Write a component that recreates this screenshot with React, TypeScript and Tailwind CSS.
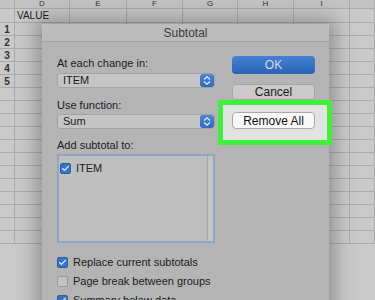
import { Check } from 'lucide-react'

const cols = ['D', 'E', 'F', 'G', 'H', 'I', '']
const rows = Array.from({ length: 17 }, (_, i) => i)

function Stepper() {
  return (
    <div className="w-[14px] h-full rounded-[3px] bg-gradient-to-b from-[#4a86d8] to-[#2f68bd] flex flex-col items-center justify-center gap-[1px]">
      <svg width="8" height="4" viewBox="0 0 8 4">
        <path d="M1 3.5 L4 0.8 L7 3.5" fill="none" stroke="#e8eef8" strokeWidth="1.2" />
      </svg>
      <svg width="8" height="4" viewBox="0 0 8 4">
        <path d="M1 0.5 L4 3.2 L7 0.5" fill="none" stroke="#e8eef8" strokeWidth="1.2" />
      </svg>
    </div>
  )
}

function Select({ value }: { value: string }) {
  return (
    <div className="h-[15px] w-full flex items-stretch rounded-[3px] bg-[#c5c5c5] border border-[#a3a3a3]">
      <span className="flex-1 pl-[5px] text-[11px] leading-[13px] text-[#1c1c1c]">{value}</span>
      <Stepper />
    </div>
  )
}

function Box({ checked }: { checked: boolean }) {
  return checked ? (
    <span className="w-[11px] h-[11px] rounded-[2px] bg-[#3675c6] border border-[#2a5ea6] flex items-center justify-center">
      <Check className="w-[9px] h-[9px] text-[#e8eef8]" strokeWidth={3} />
    </span>
  ) : (
    <span className="w-[11px] h-[11px] rounded-[2px] bg-[#c3c3c3] border border-[#9a9a9a]" />
  )
}

function CheckRow({ checked, label }: { checked: boolean; label: string }) {
  return (
    <div className="h-[14px] flex items-center gap-[5px] whitespace-nowrap">
      <Box checked={checked} />
      <span className="text-[11px] leading-[14px] text-[#1c1c1c]">{label}</span>
    </div>
  )
}

export default function App() {
  return (
    <div
      className="relative w-[375px] h-[300px] overflow-hidden bg-[#c9c9c9]"
      style={{ fontFamily: '"Liberation Sans", Arial, sans-serif' }}
    >
      {/* sheet */}
      <div className="grid grid-cols-[15px_55px_57px_56px_55px_56px_56px_25px]">
        <div className="h-[9px] border-r border-b border-[#aaaaaa] bg-[#c3c3c3]" />
        {cols.map((c, i) => (
          <div
            key={i}
            className="h-[9px] border-r border-b border-[#aaaaaa] bg-[#c3c3c3] flex justify-center"
          >
            <span className="text-[8px] leading-[8px] text-[#333]">{c}</span>
          </div>
        ))}
        <div className="h-[14px] border-r border-b border-[#aaaaaa]" />
        <div className="h-[14px] border-r border-b border-[#aaaaaa] pl-[2px] text-[10px] leading-[14px] text-[#222]">
          VALUE
        </div>
        {cols.slice(1).map((_, i) => (
          <div key={i} className="h-[14px] border-r border-b border-[#aaaaaa]" />
        ))}
        {rows.map((r) => (
          <div key={r} className="contents">
            <div className="h-[13px] border-r border-b border-[#aaaaaa] text-[10px] leading-[13px] font-bold text-[#333] text-center">
              {r < 5 ? r + 1 : ''}
            </div>
            {cols.map((_, i) => (
              <div key={i} className="h-[13px] border-r border-b border-[#aaaaaa]" />
            ))}
          </div>
        ))}
      </div>

      {/* green highlight, drawn under the Remove All button */}
      <div className="absolute left-[218px] top-[100px] w-[114px] h-[45px] border-[5px] border-[#3ef03a] bg-[#e2e2e2] z-[5]" />

      {/* dialog window */}
      <div className="absolute left-[42px] top-[24px] w-[287px] h-[300px] flex flex-col shadow-[0_0_18px_6px_rgba(0,0,0,0.28)]">
        <div className="h-[18px] bg-[#bcbcbc] border-b border-[#a4a4a4] rounded-t-[4px] flex items-center justify-center">
          <span className="text-[12px] leading-[14px] text-[#3a3a3a]">Subtotal</span>
        </div>
        <div className="flex-1 bg-[#b4b4b4] flex pl-[15px] pt-[14px]">
          <div className="w-[158px] flex flex-col">
            <span className="text-[11px] leading-[14px] text-[#1c1c1c]">At each change in:</span>
            <div className="mt-[3px]">
              <Select value="ITEM" />
            </div>
            <span className="mt-[10px] text-[11px] leading-[14px] text-[#1c1c1c]">Use function:</span>
            <div className="mt-[2px]">
              <Select value="Sum" />
            </div>
            <span className="mt-[9px] text-[11px] leading-[14px] text-[#1c1c1c]">Add subtotal to:</span>
            <div className="mt-[2px] h-[89px] border-2 border-[#8ea6c6] bg-[#bfbfbf] flex">
              <div className="flex-1 pt-[5px] pl-[1px]">
                <CheckRow checked label="ITEM" />
              </div>
              <div className="w-[6px] border-l border-[#a9a9a9] bg-[#c4c4c4]" />
            </div>
            <div className="mt-[12px] flex flex-col gap-[5px]">
              <CheckRow checked label="Replace current subtotals" />
              <CheckRow checked={false} label="Page break between groups" />
              <CheckRow checked label="Summary below data" />
            </div>
          </div>
          <div className="ml-[17px] w-[83px] flex flex-col">
            <div className="h-[18px] rounded-[4px] bg-gradient-to-b from-[#4581d3] to-[#2a63b6] flex items-center justify-center">
              <span className="text-[12px] leading-[14px] text-[#d0dcf0]">OK</span>
            </div>
            <div className="mt-[10px] h-[16px] rounded-[4px] bg-[#cacaca] border border-[#a6a6a6] flex items-center justify-center">
              <span className="text-[12px] leading-[14px] text-[#1c1c1c]">Cancel</span>
            </div>
            <div className="mt-[12px] h-[17px] rounded-[4px] bg-[#f8f8f8] border border-[#a9a9a9] flex items-center justify-center relative z-10">
              <span className="text-[12px] leading-[14px] text-[#111]">Remove All</span>
            </div>
          </div>
        </div>
      </div>
    </div>
  )
}
